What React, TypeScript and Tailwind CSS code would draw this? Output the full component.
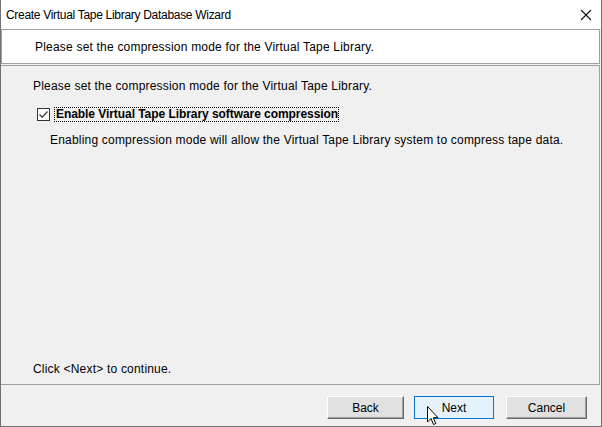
import React from "react";

export default function App() {
  const body = { fontFamily: '"Liberation Sans", Arial, sans-serif', letterSpacing: "0.2px" };
  return (
    <div className="relative w-[602px] h-[427px] bg-[#f0f0f0] border-x border-b border-[#707070] flex flex-col overflow-hidden" style={body}>
      {/* title bar */}
      <div className="h-[29px] bg-white flex items-center justify-between pl-[5px] pr-[9px] shrink-0">
        <span className="text-[12px] text-black" style={{ fontFamily: '"Liberation Sans", Arial, sans-serif', letterSpacing: "-0.3px" }}>
          Create Virtual Tape Library Database Wizard
        </span>
        <svg width="12" height="12" viewBox="0 0 12 12">
          <path d="M1 1 L11 11 M11 1 L1 11" stroke="#111" strokeWidth="1.1" fill="none" />
        </svg>
      </div>
      {/* header */}
      <div className="h-[35px] shrink-0 bg-white border border-[#a0a0a0] mr-[1px] flex items-center pl-[33px] pt-[1px] text-[12px] text-black">
        Please set the compression mode for the Virtual Tape Library.
      </div>
      {/* body */}
      <div className="flex-1 flex flex-col border-t border-[#a0a0a0] border-r border-b mr-[1px] mt-[1px] pl-[32px] text-[12px] text-black">
        <div className="mt-[13px] leading-[14px]">Please set the compression mode for the Virtual Tape Library.</div>
        <div className="mt-[14px] ml-[4px] flex items-center">
          <div className="w-[13px] h-[13px] border border-[#333] bg-white flex items-center justify-center">
            <svg width="11" height="11" viewBox="0 0 11 11">
              <path d="M1.5 5.5 L4.2 8.2 L9.5 2.5" stroke="#333" strokeWidth="1.2" fill="none" />
            </svg>
          </div>
          <div className="ml-[4px] border border-dotted border-black pl-[1px] pr-0 leading-[13px] font-bold" style={{ letterSpacing: "-0.06px" }}>
            Enable Virtual Tape Library software compression
          </div>
        </div>
        <div className="mt-[11px] ml-[17px] leading-[14px]">
          Enabling compression mode will allow the Virtual Tape Library system to compress tape data.
        </div>
        <div className="flex-1" />
        <div className="mb-[8px] leading-[14px]">Click &lt;Next&gt; to continue.</div>
      </div>
      {/* footer */}
      <div className="h-[41px] shrink-0 flex items-start justify-end pt-[11px] pr-[14px] text-[12px]" style={{ letterSpacing: "0px" }}>
        <button className="w-[77px] h-[23px] bg-[#e1e1e1] border border-t-white border-l-white border-r-[#696969] border-b-[#696969] shadow-[inset_-1px_-1px_0_#a0a0a0] text-black">
          Back
        </button>
        <button className="ml-[10px] w-[80px] h-[23px] bg-[#e5f1fb] border border-[#0078d7] text-black">
          Next
        </button>
        <button className="ml-[12px] w-[81px] h-[23px] bg-[#e1e1e1] border border-t-white border-l-white border-r-[#696969] border-b-[#696969] shadow-[inset_-1px_-1px_0_#a0a0a0] text-black">
          Cancel
        </button>
      </div>
      {/* cursor */}
      <svg className="absolute left-[426px] top-[406px]" width="14" height="21" viewBox="0 0 14 21">
        <path d="M0.5 0.5 L0.5 16 L4 12.5 L6.5 18.5 L8.8 17.5 L6.3 11.7 L11 11.7 Z" fill="white" stroke="black" strokeWidth="1" strokeLinejoin="miter" />
      </svg>
    </div>
  );
}
